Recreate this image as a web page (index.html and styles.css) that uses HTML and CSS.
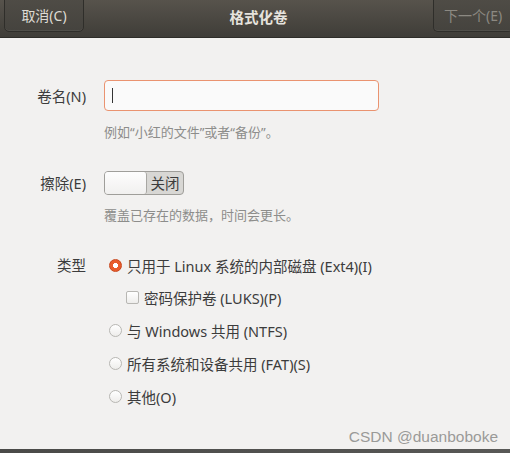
FILE: index.html
```html
<!DOCTYPE html>
<html lang="zh">
<head>
<meta charset="utf-8">
<title>格式化卷</title>
<link rel="stylesheet" href="styles.css">
</head>
<body>
<div class="window">
  <header class="headerbar">
    <button class="hb-btn cancel">取消(C)</button>
    <div class="title">格式化卷</div>
    <button class="hb-btn next" disabled>下一个(E)</button>
  </header>
  <main class="content">
    <div class="row row-name">
      <label class="label">卷名(N)</label>
      <div class="field">
        <div class="entry"><span class="caret"></span></div>
      </div>
    </div>
    <div class="hint hint-name">例如“小红的文件”或者“备份”。</div>

    <div class="row row-erase">
      <label class="label">擦除(E)</label>
      <div class="field">
        <div class="switch"><span class="knob"></span><span class="switch-text">关闭</span></div>
      </div>
    </div>
    <div class="hint hint-erase">覆盖已存在的数据，时间会更长。</div>

    <div class="row row-type">
      <label class="label">类型</label>
      <div class="field options">
        <div class="opt"><span class="radio checked"></span><span>只用于 Linux 系统的内部磁盘 (Ext4)(I)</span></div>
        <div class="opt sub"><span class="check"></span><span>密码保护卷 (LUKS)(P)</span></div>
        <div class="opt"><span class="radio"></span><span>与 Windows 共用 (NTFS)</span></div>
        <div class="opt"><span class="radio"></span><span>所有系统和设备共用 (FAT)(S)</span></div>
        <div class="opt"><span class="radio"></span><span>其他(O)</span></div>
      </div>
    </div>
    <div class="watermark">CSDN @duanboboke</div>
  </main>
  <div class="bottom-strip"></div>
</div>
</body>
</html>
```

FILE: styles.css
```css
* { box-sizing: border-box; }
html, body { margin: 0; padding: 0; }
body {
  width: 510px;
  height: 453px;
  overflow: hidden;
  background: #f2f1f0;
  font-family: "Noto Sans", "Noto Sans CJK SC", sans-serif;
  color: #3c3c3c;
}
.window {
  width: 510px;
  height: 453px;
  display: flex;
  flex-direction: column;
}
.headerbar {
  height: 38px;
  flex: none;
  background: linear-gradient(#57534c, #3f3d38);
  border-bottom: 1px solid #2e2d29;
  display: flex;
  align-items: flex-start;
  justify-content: space-between;
  padding: 0 0 0 4px;
}
.hb-btn {
  height: 34px;
  margin-top: -2px;
  font-family: inherit;
  font-size: 14px;
  background: linear-gradient(#4f4c46, #45433e);
  border: 1px solid #2f2e2a;
  border-radius: 0 0 5px 5px;
  box-shadow: inset 0 -1px 0 rgba(255,255,255,0.06);
  padding: 0;
}
.cancel {
  width: 80px;
  color: #dedbd4;
}
.next {
  width: 80px;
  margin-right: -3px;
  color: #8c8982;
  border-right: none;
  text-align: left;
  padding-left: 10px;
}
.title {
  font-size: 14.5px;
  font-weight: bold;
  color: #e6e3dd;
  line-height: 34px;
}
.content {
  flex: 1;
  position: relative;
  padding-top: 42px;
}
.row {
  display: grid;
  grid-template-columns: 86px 1fr;
  column-gap: 18px;
}
.label {
  text-align: right;
  font-size: 14.5px;
  color: #3c3c3c;
}
.row-name { align-items: center; }
.entry {
  width: 275px;
  height: 31px;
  border: 1px solid #ea9370;
  border-radius: 4px;
  background: #fafafa;
  display: flex;
  align-items: center;
  padding-left: 7px;
}
.caret {
  width: 1px;
  height: 15px;
  background: #333;
}
.hint {
  margin-left: 104px;
  font-size: 13px;
  line-height: 18px;
  color: #8d8d8b;
}
.hint-name { margin-top: 12px; }
.row-erase { margin-top: 30px; align-items: center; }
.row-erase .label { line-height: 24px; }
.switch {
  width: 80px;
  height: 24px;
  border: 1px solid #9f9e9a;
  border-radius: 4px;
  background: #d8d7d4;
  display: flex;
  align-items: center;
}
.knob {
  width: 42px;
  height: 22px;
  background: linear-gradient(#fdfdfd, #f1f0ef);
  border-right: 1px solid #a8a7a3;
  border-radius: 3px;
}
.switch-text {
  flex: 1;
  text-align: center;
  font-size: 14.5px;
  line-height: 22px;
  color: #3c3c3c;
}
.hint-erase { margin-top: 11px; }
.row-type { margin-top: 31px; align-items: start; }
.row-type .label { line-height: 20px; }
.options {
  display: flex;
  flex-direction: column;
  gap: 12.8px;
}
.opt {
  display: flex;
  align-items: center;
  height: 20px;
  font-size: 14.5px;
  color: #3c3c3c;
  padding-left: 5px;
}
.opt.sub { padding-left: 22px; }
.radio {
  width: 13px;
  height: 13px;
  border-radius: 50%;
  border: 1px solid #b8b7b3;
  background: linear-gradient(#ffffff, #eeedeb);
  margin-right: 5px;
  flex: none;
}
.radio.checked {
  border: 1px solid #c9471c;
  background: radial-gradient(circle, #ffffff 0 2.3px, #e95b2b 2.8px);
}
.check {
  width: 13px;
  height: 13px;
  border: 1px solid #b8b7b3;
  border-radius: 2px;
  background: linear-gradient(#ffffff, #eeedeb);
  margin-right: 5px;
  flex: none;
}
.watermark {
  position: absolute;
  right: 12px;
  bottom: 3px;
  font-family: "Liberation Sans", Arial, sans-serif;
  font-size: 15.5px;
  color: #9a9a98;
}
.bottom-strip {
  height: 4px;
  flex: none;
  background: linear-gradient(90deg, #4a4a48, #585856);
}
```
